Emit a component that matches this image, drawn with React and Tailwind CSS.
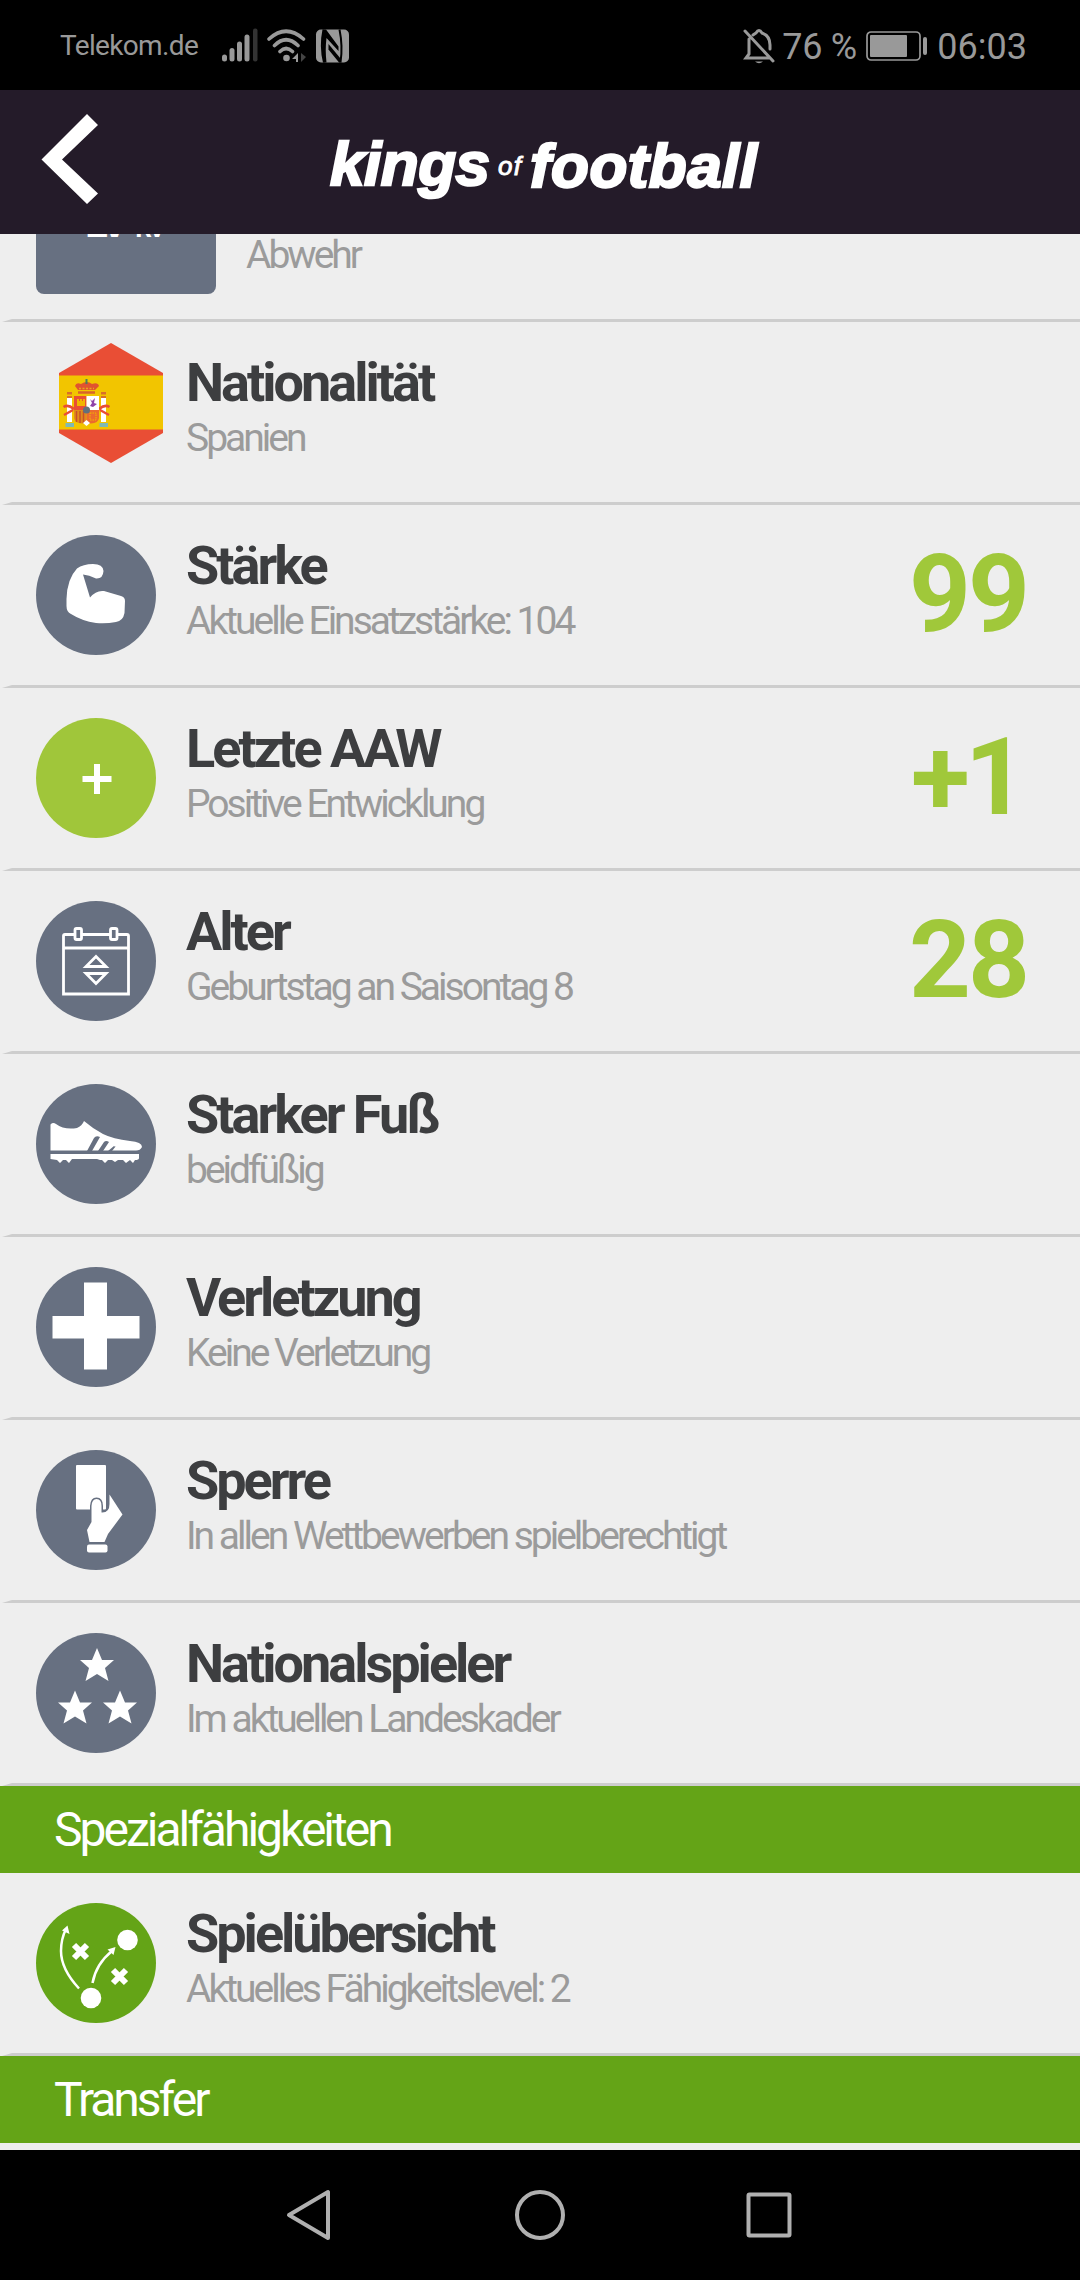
import React from 'react';

const SLATE = 'bg-[#677081]';

function Badge({ color = SLATE, children }) {
  return (
    <div className={`mt-[30px] ml-9 size-[120px] shrink-0 rounded-full ${color}`}>
      <svg viewBox="0 0 120 120" className="size-full" fill="white">
        {children}
      </svg>
    </div>
  );
}

function Divider() {
  return <div className="h-[3px] w-full bg-[#cdcdcd] [clip-path:polygon(2px_100%,12px_0,100%_0,100%_100%)]" />;
}

function Row({ icon, title, subtitle, value, valueClass = '-ml-[1px]' }) {
  return (
    <div className="flex h-[183px] flex-col">
      <div className="flex flex-1">
        <div className="flex w-[186px] shrink-0">{icon}</div>
        <div className="flex flex-1 flex-col pt-[34px]">
          <h2 className="text-[54px] leading-[54px] font-bold text-[#3d3e40]">{title}</h2>
          <p className="text-[39px] leading-[57px] text-[#9b9b9b]">{subtitle}</p>
        </div>
        {value && (
          <div className="w-[170px] pt-[35px] text-[108px] leading-[108px] font-bold text-[#a0c83a]">
            <div className={valueClass}>{value}</div>
          </div>
        )}
      </div>
      <Divider />
    </div>
  );
}

function Section({ title }) {
  return (
    <div className="h-[87px] bg-[#64a417] pl-[54px] text-[48px] leading-[87px] text-white">{title}</div>
  );
}

function Flag() {
  return (
    <svg viewBox="0 0 104 120" className="mt-[21px] ml-[59px] h-[120px] w-[104px]">
      <clipPath id="hex">
        <path d="M52 0L104 30V90L52 120L0 90V30Z" />
      </clipPath>
      <g clipPath="url(#hex)">
        <rect width="104" height="120" fill="#e94e35" />
        <rect y="32.500" width="104" height="54" fill="#f2c500" />
      </g>
      {/* coat of arms */}
      <path d="M19 47L16 43Q17 39 22 41Q28 37 33 41Q39 39 40 43L36 47Z" fill="#e0542f" />
      <path d="M19 49.500H36" stroke="#d8642a" strokeWidth="2.500" />
      <path d="M20 45.500H35" stroke="#e9a81a" strokeWidth="1.500" strokeDasharray="2 1.500" />
      <path d="M27.500 36V41" stroke="#4d7d5c" strokeWidth="2" />
      <path d="M8 55h5v24h-5zM42 55h5v24h-5z" fill="#fff" />
      <path d="M8 49h5v2.500h-5zM8 53h5v2h-5zM42 49h5v2.500h-5zM42 53h5v2h-5z" fill="#d8702a" />
      <path d="M6.500 80h8.500v4h-8.500zM40.500 80h8.500v4h-8.500z" fill="#7fb9b4" />
      <path d="M4.500 64Q9 61 15 66M14 67L5 72M50.500 64Q46 61 40 66M41 67L50 72" stroke="#e94e35" strokeWidth="2.500" fill="none" />
      <path d="M15 53H27.500V67H15Z" fill="#e94e35" />
      <path d="M27.500 53H40V67H27.500Z" fill="#fff" />
      <path d="M15 67H27.500V80Q16 82 15 75Z" fill="#e08b1d" />
      <path d="M27.500 67H40V75Q39 82 27.500 80Z" fill="#ec6a2d" />
      <path d="M17.500 68v11M21 68v12M24.500 68v12" stroke="#c9502a" strokeWidth="1.500" />
      <path d="M31 70h6v7h-6z" fill="none" stroke="#f2b500" strokeWidth="1" strokeDasharray="1.500 1" />
      <path d="M24 80L27.500 77L31 80L27.500 83Z" fill="#fff" />
      <path d="M18 63v-7h2v2h1v-2h2v2h1v-2h2v7z" fill="#f2b500" />
      <path d="M31 56l2 2 3-3-1 5 3 1-4 3-3-1 2-3z" fill="#8f43a8" />
      <circle cx="27.500" cy="67" r="3.500" fill="#62707c" />
    </svg>
  );
}

function ArmIcon() {
  return (
    <Badge>
      <path d="M47 39.500L54 62.500Q60 55 68 56L85 61Q89 62 89 66L88.500 78Q87 86 80 87Q70 89 60 88Q46 86 35 79Q30.500 77 30.500 71V64Q31 44 41 33.500Q47 29 57 29Q67 29 67.500 36Q67 44 60 43.500Q53 40 47 39.500Z" />
    </Badge>
  );
}

function PlusIcon() {
  return (
    <Badge color="bg-[#a0c63a]">
      <path d="M58 46h6v12h11.500v6h-11.500v12h-6v-12h-11.500v-6h11.500z" />
    </Badge>
  );
}

function CalendarIcon() {
  return (
    <Badge>
      <g fill="none" stroke="white" strokeWidth="2.800">
        <path d="M38 33.500H29Q27.500 33.500 27.500 35V93H92.500V35Q92.500 33.500 91 33.500H82M46 33.500H74M27.500 47H92.500" />
        <rect x="39" y="27.500" width="6.500" height="11" rx="1.500" />
        <rect x="74.500" y="27.500" width="6.500" height="11" rx="1.500" />
        <path d="M60 55.500L70 65.500H50ZM60 82.500L70 72.500H50Z" />
      </g>
    </Badge>
  );
}

function ShoeIcon() {
  return (
    <Badge>
      <path d="M14.500 40.500Q17 38 20 40Q28 46 41 44Q46 42 48 37Q56 44 67 50Q77 55 94 57Q106 58 106 63Q104 67 99 66.500H14.500Z" />
      <path d="M14.500 70H103V74Q103 76 99 76L97 79L94 76L90 79L87 76H82L79 78L76 76H72L69 79L66 76H64L61 75H36L33 79L30 76L27 76L24 79L21 76L14.500 75Z" />
      <path d="M51 67L58 54Q60 51 64 53L56 67ZM62 67L68 58Q70 56 73 58L67 67ZM72 67L78 62Q79 63 80 62L76 67Z" fill="#677081" />
    </Badge>
  );
}

function CrossIcon() {
  return (
    <Badge>
      <path d="M48 15.500h23v33.500h32.500v22.500h-32.500v31h-23v-31h-31.500v-22.500h31.500z" />
    </Badge>
  );
}

function CardIcon() {
  return (
    <Badge>
      <rect x="40" y="15" width="30" height="44.500" rx="1" />
      <path
        d="M73.500 44.500L86.500 64.500L72 84L68.500 92H53.500L51 80L55.500 72V56Q56 49 60.500 49Q65.500 49 65.500 56V62.500Q73.500 63 73.500 54Z"
        stroke="#677081"
        strokeWidth="3"
        paintOrder="stroke"
      />
      <rect x="51" y="94.500" width="20.500" height="8" rx="2" />
    </Badge>
  );
}

const STAR = 'M0-18L5-6L17-6L8 2L11.500 15L0 8L-11.500 15L-8 2L-17-6L-5-6Z';

function StarsIcon() {
  return (
    <Badge>
      <path d={STAR} transform="translate(61 33)" />
      <path d={STAR} transform="translate(39 75.500)" />
      <path d={STAR} transform="translate(84 75.500)" />
    </Badge>
  );
}

function TacticIcon() {
  return (
    <Badge color="bg-[#64a417]">
      <circle cx="91.500" cy="37" r="10.300" />
      <circle cx="55" cy="95" r="10.300" />
      <g fill="none" stroke="white" strokeWidth="2.500">
        <path d="M43 85.500Q25 66 25 48Q25 36 30 26M56.500 80Q60 61 76 48" />
        <path d="M38 42L51 55M51 42L38 55M77 67L90 80M90 67L77 80" strokeWidth="6" />
      </g>
      <path d="M31.500 22.500L33.500 31L26 27.500ZM79.500 44L77.500 52L71.500 46.500Z" />
    </Badge>
  );
}

function StatusBar() {
  return (
    <div className="flex h-[90px] items-center bg-black pt-[2px] pr-[53px] pl-[60px] text-[#999]">
      <span className="w-[162px] text-[28px] tracking-[-0.65px]">Telekom.de</span>
      <svg viewBox="0 0 127 36" className="h-9 w-[127px]" fill="currentColor">
        <rect y="26.500" width="5" height="7" rx="2.500" />
        <rect x="7.500" y="20" width="5" height="13.500" rx="2.500" />
        <rect x="15" y="13.500" width="5" height="20" rx="2.500" />
        <rect x="22.500" y="6.500" width="5" height="27" rx="2.500" />
        <rect x="31" y="0.500" width="4.500" height="33" rx="2" fill="#333" />
        <g fill="none" stroke="currentColor" strokeWidth="3.600" strokeLinecap="round">
          <path d="M47 11Q64-4.500 81.500 11M52.500 17.500Q64 6 76 17.500M58 23.500Q64 17.500 70.500 23.500" />
        </g>
        <circle cx="64.500" cy="30" r="3.300" />
        <path d="M76 25V34H74V31H70Z" />
        <path d="M79 25V34L84 29Z" fill="#444" />
        {/* nfc */}
        <g transform="translate(94 1.500)">
          <rect width="33" height="33" rx="5" />
          <path d="M7.500 0Q4 17 8 33M23.500 0Q27 17 24.500 33" fill="none" stroke="#000" strokeWidth="2" />
          <path d="M7.500 0H10L22.500 17V21.500L10.500 8.500Q9 20 10.500 33H8Q5 17 7.500 0Z" fill="#000" />
          <path d="M12.500 14.500L24.500 29V33H23L12.500 20Z" fill="#000" />
        </g>
      </svg>
      <div className="ml-auto flex items-center text-[36px] leading-9">
        <svg viewBox="0 0 32 36" className="mr-[7px] h-9 w-8" fill="none" stroke="currentColor" strokeWidth="3">
          <path d="M6 11V26L3 30H27M10 7L13 5Q16 0 19 5Q27 8 27 17V21M2 3L30 33" strokeLinecap="round" />
          <path d="M12 33.500H20Q16 37 12 33.500Z" fill="currentColor" stroke="none" />
        </svg>
        <span className="w-[84px] pt-[2px] tracking-[-0.3px]">76 %</span>
        <svg viewBox="0 0 62 32" className="h-8 w-[62px]" fill="currentColor">
          <rect x="1" y="2" width="53" height="28" rx="4" fill="none" stroke="currentColor" strokeWidth="1.700" />
          <rect x="4" y="5" width="37" height="22" rx="1" />
          <rect x="57" y="7" width="4" height="18" rx="2" />
        </svg>
        <span className="ml-[9px] pt-[2px]">06:03</span>
      </div>
    </div>
  );
}

function Header() {
  return (
    <header className="h-36 bg-[#241b29]">
      <svg viewBox="0 0 1080 144" className="h-36 w-[1080px]" fill="white">
        <path d="M87 24L98 35L62 69.500L98 103.500L87 114L41.500 69.500Z" />
        <g fontFamily="Liberation Sans, sans-serif" fontStyle="italic" fontWeight="700">
          <g fontSize="62" stroke="white" strokeWidth="2.400">
            <text x="330" y="95" textLength="160" lengthAdjust="spacing">kings</text>
            <text x="530" y="96.500" textLength="227" lengthAdjust="spacing">football</text>
          </g>
          <text x="498" y="85" fontSize="26" fontWeight="400" stroke="white" strokeWidth="0.900" textLength="23">of</text>
        </g>
      </svg>
    </header>
  );
}

function NavBar() {
  return (
    <nav className="flex h-[130px] items-center justify-center bg-black">
      <svg viewBox="0 0 520 60" className="h-[60px] w-[520px]" fill="none" stroke="#b0b0b0" strokeWidth="4" strokeLinejoin="round">
        <path d="M9 30L48 7V53Z" />
        <circle cx="260" cy="30" r="23" />
        <rect x="468.500" y="9.500" width="41" height="41" rx="1" />
      </svg>
    </nav>
  );
}

export default function App() {
  return (
    <div className="h-[2280px] w-[1080px] overflow-hidden bg-[#eee] font-[Roboto,sans-serif]">
      <StatusBar />
      <Header />
      <main className="h-[1916px] overflow-hidden tracking-[-3px]">
        {/* position row, scrolled halfway under the header */}
        <div className="flex h-[88px] flex-col">
          <div className="flex flex-1">
            <div className="ml-9 h-[60px] w-[180px] rounded-b-lg bg-[#677081] pl-[49px]">
              <div className="-mt-[32px] flex h-[42px] items-baseline gap-[10px] text-[42px] leading-[42px] font-bold text-white">
                <span>LV</span>
                <span className="text-[26px] leading-[26px]">RV</span>
              </div>
            </div>
            <p className="ml-[30px] text-[39px] leading-[42px] text-[#9b9b9b]">Abwehr</p>
          </div>
          <Divider />
        </div>
        <Row icon={<Flag />} title="Nationalität" subtitle="Spanien" />
        <Row icon={<ArmIcon />} title="Stärke" subtitle="Aktuelle Einsatzstärke: 104" value="99" />
        <Row
          icon={<PlusIcon />}
          title="Letzte AAW"
          subtitle="Positive Entwicklung"
          value="+1"
          valueClass="ml-[1px] tracking-[-5px]"
        />
        <Row icon={<CalendarIcon />} title="Alter" subtitle="Geburtstag an Saisontag 8" value="28" />
        <Row icon={<ShoeIcon />} title="Starker Fuß" subtitle="beidfüßig" />
        <Row icon={<CrossIcon />} title="Verletzung" subtitle="Keine Verletzung" />
        <Row icon={<CardIcon />} title="Sperre" subtitle="In allen Wettbewerben spielberechtigt" />
        <Row icon={<StarsIcon />} title="Nationalspieler" subtitle="Im aktuellen Landeskader" />
        <Section title="Spezialfähigkeiten" />
        <Row icon={<TacticIcon />} title="Spielübersicht" subtitle="Aktuelles Fähigkeitslevel: 2" />
        <Section title="Transfer" />
      </main>
      <NavBar />
    </div>
  );
}
